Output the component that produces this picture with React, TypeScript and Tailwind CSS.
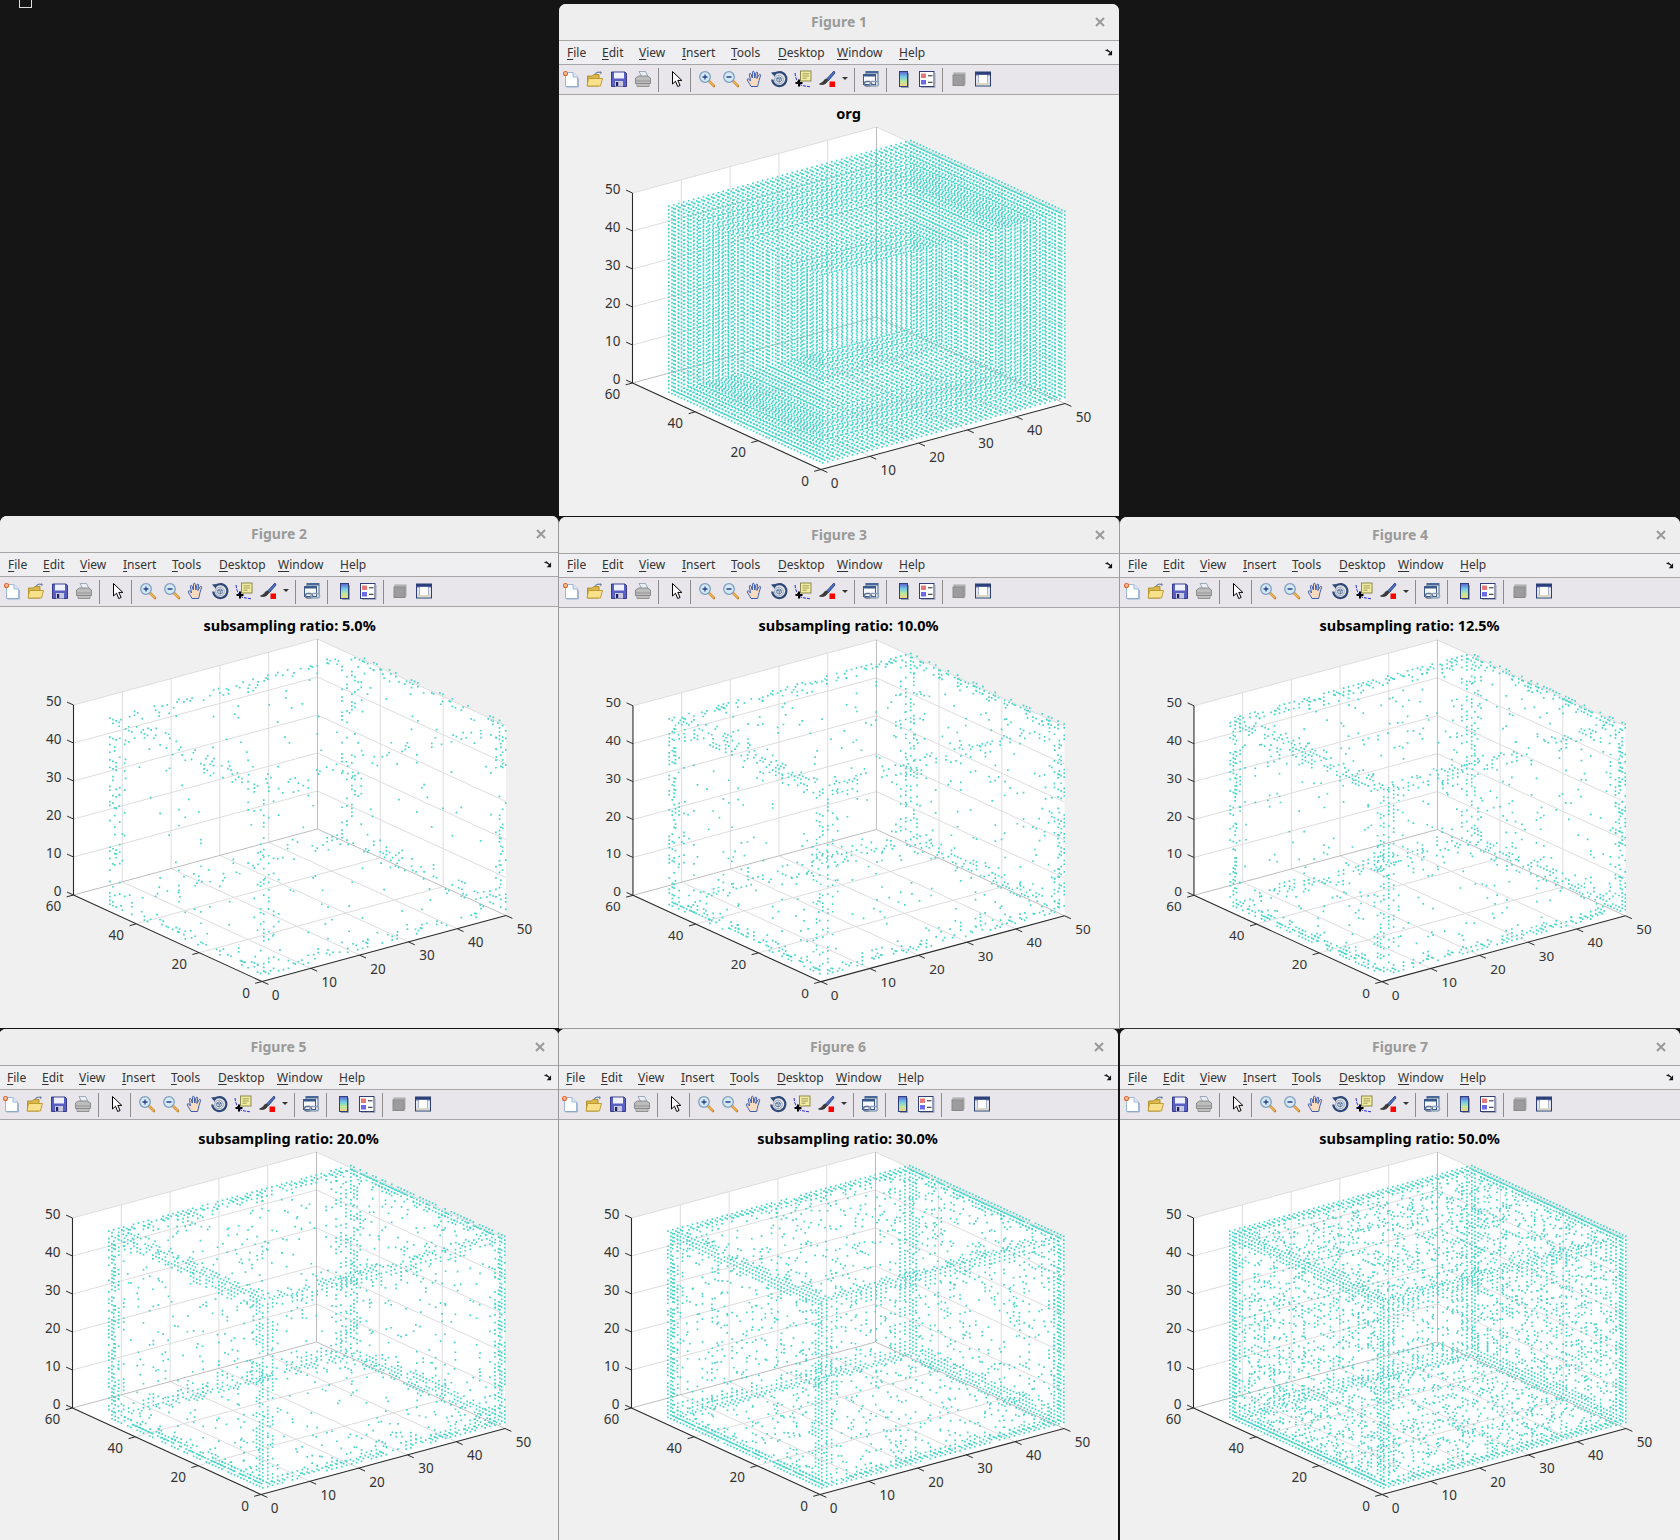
import React from "react";

const P = (x: number, y: number, z: number): [number, number] => [
  821 + x * 4.88 + y * (-188.5 / 60),
  469.5 + x * -1.32 + y * (-86.5 / 60) - z * 3.8,
];
const pt = (p: [number, number]) => `${p[0].toFixed(1)} ${p[1].toFixed(1)}`;
const seg = (a: [number, number], b: [number, number]) => `M${pt(a)}L${pt(b)}`;

function rng(seed: number) {
  return () => {
    seed |= 0;
    seed = (seed + 0x6d2b79f5) | 0;
    let t = Math.imul(seed ^ (seed >>> 15), 1 | seed);
    t = (t + Math.imul(t ^ (t >>> 7), 61 | t)) ^ t;
    return ((t ^ (t >>> 14)) >>> 0) / 4294967296;
  };
}

function dots(pEdge: number, pFace: number, seed: number) {
  const r = rng(seed);
  let d = "";
  for (let x = 1; x <= 50; x++)
    for (let y = 1; y <= 50; y++)
      for (let z = 1; z <= 50; z++) {
        const ds = [Math.min(x - 1, 50 - x), Math.min(y - 1, 50 - y), Math.min(z - 1, 50 - z)].sort((a, b) => a - b);
        if (ds[0] !== 0) continue;
        const e = ds[1];
        let p = pFace;
        if (e <= 1) p = pEdge;
        else if (e === 2) p = Math.max(pFace, pEdge * 0.75);
        else if (e === 3) p = Math.max(pFace, pEdge * 0.3);
        if (r() > p) continue;
        const q = P(x * 1.012, y, z);
        d += `M${(q[0] - 0.85).toFixed(1)} ${(q[1] - 0.85).toFixed(1)}h1.7v1.7h-1.7z`;
      }
  return d;
}

function gridPath() {
  let d = "";
  for (const x of [10, 20, 30, 40]) {
    d += seg(P(x, 0, 0), P(x, 60, 0)) + seg(P(x, 60, 0), P(x, 60, 50));
  }
  for (const y of [20, 40]) {
    d += seg(P(0, y, 0), P(50, y, 0)) + seg(P(50, y, 0), P(50, y, 50));
  }
  for (const z of [10, 20, 30, 40, 50]) {
    d += seg(P(0, 60, z), P(50, 60, z)) + seg(P(50, 60, z), P(50, 0, z));
  }
  return d;
}
const GRID = gridPath();
const BACK = seg(P(0, 60, 0), P(50, 60, 0)) + seg(P(50, 60, 0), P(50, 0, 0)) + seg(P(50, 60, 0), P(50, 60, 50));

function ticksPath() {
  let d = "";
  const ux = 7 / Math.hypot(4.88, 1.32);
  const uy = 7 / Math.hypot(188.5 / 60, 86.5 / 60);
  for (const z of [0, 10, 20, 30, 40, 50]) {
    const a = P(0, 60, z);
    d += seg(a, [a[0] - 188.5 / 60 * uy, a[1] - 86.5 / 60 * uy]);
  }
  for (const y of [0, 20, 40, 60]) {
    const a = P(0, y, 0);
    d += seg(a, [a[0] - 4.88 * ux, a[1] + 1.32 * ux]);
  }
  for (const x of [0, 10, 20, 30, 40, 50]) {
    const a = P(x, 0, 0);
    d += seg(a, [a[0] + 188.5 / 60 * uy, a[1] + 86.5 / 60 * uy]);
  }
  return d;
}
const TICKS = ticksPath();
const AXES = seg(P(0, 60, 0), P(0, 60, 50)) + seg(P(0, 60, 0), P(0, 0, 0)) + seg(P(0, 0, 0), P(50, 0, 0));
const FACES = [P(0, 60, 0), P(0, 60, 50), P(50, 60, 50), P(50, 0, 50), P(50, 0, 0), P(0, 0, 0)].map(pt).join(" ");

function Plot({ title, d }: { title: string; d: string }) {
  const label = "text-[13.5px] fill-[#333333]";
  return (
    <svg width="560" height="421" viewBox="0 91 560 421" className="block">
      <g transform="translate(-559 -4)">
        <polygon points={FACES} fill="#ffffff" />
        <path d={GRID} stroke="#dddddd" strokeWidth="1" fill="none" />
        <path d={BACK} stroke="#bdbdbd" strokeWidth="1" fill="none" />
        <path d={d} fill="#45d4ca" />
        <path d={AXES} stroke="#2a2a2a" strokeWidth="1.1" fill="none" />
        <path d={TICKS} stroke="#2a2a2a" strokeWidth="1" fill="none" />
        <g className={label} style={{ fontFamily: "'Noto Sans', sans-serif" }}>
          {[0, 10, 20, 30, 40, 50].map((z) => (
            <text key={z} x={620.5} y={P(0, 60, z)[1] - 4} textAnchor="end" dominantBaseline="central">
              {z}
            </text>
          ))}
          {[60, 40, 20].map((y) => {
            const a = P(0, y, 0);
            return (
              <text key={y} x={a[0] - 20} y={a[1] + 11} textAnchor="middle" dominantBaseline="central">
                {y}
              </text>
            );
          })}
          <text x={805} y={481} textAnchor="middle" dominantBaseline="central">0</text>
          <text x={834.6} y={483} textAnchor="middle" dominantBaseline="central">0</text>
          {[10, 20, 30, 40, 50].map((x) => {
            const a = P(x, 0, 0);
            return (
              <text key={x} x={a[0] + 18.5} y={a[1] + 13.5} textAnchor="middle" dominantBaseline="central">
                {x}
              </text>
            );
          })}
        </g>
        <text
          x={848.6}
          y={113}
          textAnchor="middle"
          dominantBaseline="central"
          className="text-[14.5px] font-bold fill-black"
          style={{ fontFamily: "'Noto Sans', sans-serif" }}
        >
          {title}
        </text>
      </g>
    </svg>
  );
}

const Ico = ({ children }: { children: React.ReactNode }) => (
  <div className="flex h-[29px] w-6 shrink-0 items-center justify-center pb-[2px]">
    <svg width="18" height="18" viewBox="0 0 18 18" fill="none">
      {children}
    </svg>
  </div>
);

const Lens = ({ sign }: { sign: "+" | "-" }) => (
  <>
    <path d="M10.5 10.5L16 16" stroke="#c98a2a" strokeWidth="2.6" strokeLinecap="round" />
    <path d="M11 11L15.5 15.5" stroke="#f4b860" strokeWidth="1.1" strokeLinecap="round" />
    <circle cx="7" cy="7" r="5.3" fill="#d5e8f5" stroke="#7d9fc0" strokeWidth="1.3" />
    <path d={sign === "+" ? "M4.5 7h5M7 4.5v5" : "M4.5 7h5"} stroke="#27408b" strokeWidth="1.3" />
  </>
);

const icons = {
  newDoc: (
    <>
      <path d="M3.5 2.5H11L15.5 7v9.5h-12z" fill="#ffffff" stroke="#9db8d8" strokeWidth="1" />
      <path d="M11 2.5V7h4.5" fill="#dfe9f5" stroke="#9db8d8" strokeWidth="1" />
      <path d="M16.5 8v9h-12" stroke="#5a7fae" strokeWidth="0.8" opacity="0.6" />
      <circle cx="3.5" cy="3.5" r="2" fill="#f7c9a8" stroke="#e4622c" strokeWidth="1.1" />
    </>
  ),
  open: (
    <>
      <path d="M9 4.5C10 2.3 12.5 1.8 15 2.6" stroke="#6f86a8" strokeWidth="1.3" fill="none" />
      <path d="M14 1l2 1.6-1.6 2z" fill="#6f86a8" />
      <path d="M1.5 6h5l1.2-1.5H13V16H1.5z" fill="#dcb84a" stroke="#a98a2a" strokeWidth="0.9" />
      <path d="M1 16l1.5-7.5h14L14.5 16z" fill="#f9e08a" stroke="#b8952c" strokeWidth="0.9" />
    </>
  ),
  save: (
    <>
      <path d="M1.5 2h13.5l1.5 1.5V16.500H1.500z" fill="#5a5fc4" stroke="#2c2f80" strokeWidth="0.9" />
      <rect x="4" y="2.500" width="10" height="6" fill="#eef0fa" />
      <rect x="5" y="11" width="8" height="5.500" fill="#c8cbe0" />
      <rect x="6" y="12" width="2.200" height="4" fill="#1e2060" />
    </>
  ),
  print: (
    <>
      <path d="M5 1.500h6.500l2.500 5H7.500z" fill="#e8eef5" stroke="#8b98a8" strokeWidth="0.8" />
      <path d="M1.500 8l3-2h9l3 2v5.500h-15z" fill="#bdbdbd" stroke="#7a7a7a" strokeWidth="0.8" />
      <path d="M2 11h14" stroke="#8a8a8a" strokeWidth="0.8" />
      <path d="M3 13.500h12v3H3z" fill="#d4d4d4" stroke="#808080" strokeWidth="0.8" />
      <path d="M4 15h10" stroke="#8f8f8f" strokeWidth="0.6" />
    </>
  ),
  cursor: <path d="M5.500 1.500V14l3-2.800 2.200 5.300 2.400-1-2.300-5.100h4z" fill="#ffffff" stroke="#000000" strokeWidth="1" />,
  zoomIn: <Lens sign="+" />,
  zoomOut: <Lens sign="-" />,
  hand: (
    <path
      d="M5 16.500C3.800 14 1.800 11.500 1.300 9.800c-.3-1 .9-1.500 1.600-.7L4.500 11 3.400 4.500c-.2-1.200 1.400-1.500 1.700-.3L6.300 8l.2-5.800c0-1.200 1.700-1.200 1.800 0L8.800 8l1.200-5.200c.3-1.100 1.800-.8 1.600.3L10.800 8.500l2.300-3.700c.6-1 2-.3 1.500.8L13 10.500c-.4 2-.8 4-1.500 6z"
      fill="#f9dcc0"
      stroke="#3b5cb0"
      strokeWidth="1"
    />
  ),
  rotate: (
    <>
      <path d="M4 4.500A7 7 0 1 1 2.300 9.500" stroke="#2f4a78" strokeWidth="2.200" fill="none" />
      <path d="M1 2.500L5.500 2 5 7z" fill="#2f4a78" />
      <circle cx="9" cy="9.500" r="4.300" fill="#e6edf5" stroke="#7d8fa8" strokeWidth="0.8" />
      <path d="M6.800 8l2.400-1 2 1v3l-2 1-2.400-1zM6.800 8l2.400 1 2-1M9.200 9v3" stroke="#2f4a78" strokeWidth="0.7" fill="none" />
    </>
  ),
  dataCursor: (
    <>
      <path d="M1 3C1.500 9 4 14 8 15.500l8 1.300" stroke="#1414e0" strokeWidth="0.9" fill="none" strokeDasharray="3 1" />
      <rect x="6.500" y="1" width="10.500" height="10" fill="#f2eba0" stroke="#8a8a50" strokeWidth="1" />
      <path d="M8.500 3.800h6.500M8.500 6h6.500M8.500 8.200h4" stroke="#8a8a50" strokeWidth="0.8" />
      <path d="M5 9.500v7M1.500 13h7" stroke="#000000" strokeWidth="2" />
    </>
  ),
  brush: (
    <>
      <path d="M16 1L8.500 9l1.800 1.800L17 3z" fill="#4a6fc0" stroke="#23357c" strokeWidth="0.8" />
      <path d="M8.500 9C6 9.500 6 11 4.800 12c-1 .9-2.300 1.500-3.300 2 2.700 1.200 6.300.5 8.300-3.300z" fill="#3c3c3c" stroke="#222222" strokeWidth="0.7" />
      <rect x="11.500" y="11.500" width="5.500" height="5.500" fill="#ff0000" />
    </>
  ),
  link: (
    <>
      <rect x="4" y="1.500" width="12" height="10" fill="#eef2f8" stroke="#4a6896" strokeWidth="1" />
      <rect x="4" y="1.500" width="12" height="2" fill="#4a6896" />
      <rect x="1.500" y="4.500" width="12" height="10" fill="#f7f9fc" stroke="#3b5a8c" strokeWidth="1" />
      <rect x="1.500" y="4.500" width="12" height="2" fill="#3b5a8c" />
      <rect x="2.500" y="11.500" width="7" height="4.500" rx="2.200" fill="none" stroke="#5d7290" strokeWidth="1.500" />
      <rect x="8" y="11.500" width="8.500" height="4.500" rx="2.200" fill="none" stroke="#8ea2bc" strokeWidth="1.500" />
    </>
  ),
  colorbar: (
    <>
      <defs>
        <linearGradient id="cb" x1="0" y1="0" x2="0" y2="1">
          <stop offset="0" stopColor="#5a5fd0" />
          <stop offset="0.35" stopColor="#70c8e8" />
          <stop offset="0.65" stopColor="#b8e8a0" />
          <stop offset="1" stopColor="#f8d080" />
        </linearGradient>
      </defs>
      <rect x="5.500" y="1.500" width="8" height="15" fill="url(#cb)" stroke="#2f3f78" strokeWidth="1" />
      <path d="M14.500 3v14.500H7" stroke="#9098a8" strokeWidth="0.9" />
    </>
  ),
  legend: (
    <>
      <rect x="1.500" y="1.500" width="14.500" height="15" fill="#ffffff" stroke="#2f3f78" strokeWidth="1" />
      <rect x="3" y="3.500" width="5" height="4.500" fill="#e87878" />
      <rect x="3" y="10" width="5" height="4.500" fill="#6a6ae8" />
      <path d="M10 5.800h4.500M10 12.300h4.500" stroke="#222222" strokeWidth="1" />
      <path d="M17 3v14.500H3" stroke="#a0a6b4" strokeWidth="0.9" />
    </>
  ),
  hide: (
    <>
      <rect x="4" y="3" width="11" height="11" fill="#bdbdbd" stroke="#a8a8a8" />
      <rect x="3" y="5" width="11" height="10.500" fill="#9c9c9c" stroke="#8a8a8a" />
    </>
  ),
  show: (
    <>
      <rect x="1.500" y="2" width="15" height="14" fill="#6f83b5" stroke="#2c3f78" strokeWidth="1" />
      <rect x="1.500" y="2" width="15" height="2.500" fill="#2c3f78" />
      <rect x="5" y="5" width="8" height="8" fill="#ffffff" />
      <rect x="2" y="13" width="14" height="2.500" fill="#d8d8c8" />
      <path d="M2 5.500h2.500v7.500H2zM13.500 5.500H16v7.500h-2.500z" fill="#e6e6ee" />
    </>
  ),
};

function Toolbar() {
  const sepBase = "h-6 w-px shrink-0 bg-[#8c8c8c]";
  return (
    <div className="flex h-[29px] items-center border-b border-[#a6a6a6] bg-[#e8e6eb] box-content">
      <Ico>{icons.newDoc}</Ico>
      <Ico>{icons.open}</Ico>
      <Ico>{icons.save}</Ico>
      <Ico>{icons.print}</Ico>
      <div className={`${sepBase} ml-[3px] mr-[5px]`} />
      <Ico>{icons.cursor}</Ico>
      <div className={`${sepBase} ml-[2px] mr-1`} />
      <Ico>{icons.zoomIn}</Ico>
      <Ico>{icons.zoomOut}</Ico>
      <Ico>{icons.hand}</Ico>
      <Ico>{icons.rotate}</Ico>
      <Ico>{icons.dataCursor}</Ico>
      <Ico>{icons.brush}</Ico>
      <div className="flex w-[11px] shrink-0 justify-center pb-[2px]">
        <div className="h-0 w-0 border-x-[3px] border-t-[3px] border-x-transparent border-t-[#333333]" />
      </div>
      <div className={`${sepBase} ml-1 mr-1`} />
      <Ico>{icons.link}</Ico>
      <div className={`${sepBase} ml-[3px] mr-1`} />
      <Ico>{icons.colorbar}</Ico>
      <Ico>{icons.legend}</Ico>
      <div className={`${sepBase} ml-[3px] mr-1`} />
      <Ico>{icons.hide}</Ico>
      <Ico>{icons.show}</Ico>
    </div>
  );
}

const MENU: [string, string, string][] = [
  ["F", "ile", "w-[35px]"],
  ["E", "dit", "w-[37px]"],
  ["V", "iew", "w-[43px]"],
  ["I", "nsert", "w-[49px]"],
  ["T", "ools", "w-[47px]"],
  ["D", "esktop", "w-[59px]"],
  ["W", "indow", "w-[62px]"],
  ["H", "elp", "w-[40px]"],
];

function Menu() {
  return (
    <div className="flex h-[23px] items-center border-b border-[#a6a6a6] bg-[#efeef1] pl-2 text-[12px] text-[#333333] box-content">
      {MENU.map(([a, b, w]) => (
        <span key={a} className={`${w} shrink-0`}>
          <span className="underline underline-offset-2">{a}</span>
          {b}
        </span>
      ))}
      <svg width="8" height="7" viewBox="0 0 9 8" className="ml-auto mr-[6px]">
        <path d="M0.500 1.500L5 3" stroke="#111111" strokeWidth="1.200" />
        <path d="M2 0.500L7 5" stroke="#111111" strokeWidth="1.200" />
        <path d="M8 1.500V7H3z" fill="#111111" />
      </svg>
    </div>
  );
}

function Figure({ name, title, d, pos }: { name: string; title: string; d: string; pos: string }) {
  return (
    <div className={`absolute flex flex-col overflow-hidden rounded-t-[7px] bg-[#f0f0f0] ${pos}`}>
      <div className="relative flex h-9 shrink-0 items-center justify-center border-b border-[#a6a6a6] bg-[#eeeeee] box-content">
        <span className="relative -top-px text-[14px] font-bold text-[#9a9a9a]">{name}</span>
        <svg width="10" height="10" viewBox="0 0 10 10" className="absolute left-[536px] top-[13px]">
          <path d="M1 1L9 9M9 1L1 9" stroke="#999999" strokeWidth="2" />
        </svg>
      </div>
      <Menu />
      <Toolbar />
      <Plot title={title} d={d} />
    </div>
  );
}

const FIGS = [
  { name: "Figure 7", title: "subsampling ratio: 50.0%", d: dots(1, 0.28, 77), pos: "left-[1120px] top-[1029px] w-[560px] h-[512px]" },
  { name: "Figure 6", title: "subsampling ratio: 30.0%", d: dots(0.92, 0.11, 66), pos: "left-[558px] top-[1029px] w-[561px] h-[512px] border-r border-[#111111]" },
  { name: "Figure 5", title: "subsampling ratio: 20.0%", d: dots(0.75, 0.055, 55), pos: "left-[-1px] top-[1029px] w-[560px] h-[512px] border-r border-[#9a9a9a]" },
  { name: "Figure 4", title: "subsampling ratio: 12.5%", d: dots(0.5, 0.035, 44), pos: "left-[1120px] top-[517px] w-[560px] h-[512px] border-b border-[#333333]" },
  { name: "Figure 3", title: "subsampling ratio: 10.0%", d: dots(0.42, 0.028, 33), pos: "left-[559px] top-[517px] w-[561px] h-[512px] border-r border-b border-[#9a9a9a]" },
  { name: "Figure 2", title: "subsampling ratio: 5.0%", d: dots(0.25, 0.014, 22), pos: "left-0 top-[516px] w-[559px] h-[512px] border-r border-[#9a9a9a]" },
  { name: "Figure 1", title: "org", d: dots(1, 1, 11), pos: "left-[559px] top-[4px] w-[560px] h-[512px]" },
];

export default function App() {
  return (
    <div className="relative h-[1540px] w-[1680px] overflow-hidden bg-[#151515]" style={{ fontFamily: "'Noto Sans', sans-serif" }}>
      <div className="absolute left-[19px] top-0 h-[8px] w-[13px] border-x border-b border-[#dddddd]" />
      {FIGS.map((f) => (
        <Figure key={f.name} {...f} />
      ))}
    </div>
  );
}
